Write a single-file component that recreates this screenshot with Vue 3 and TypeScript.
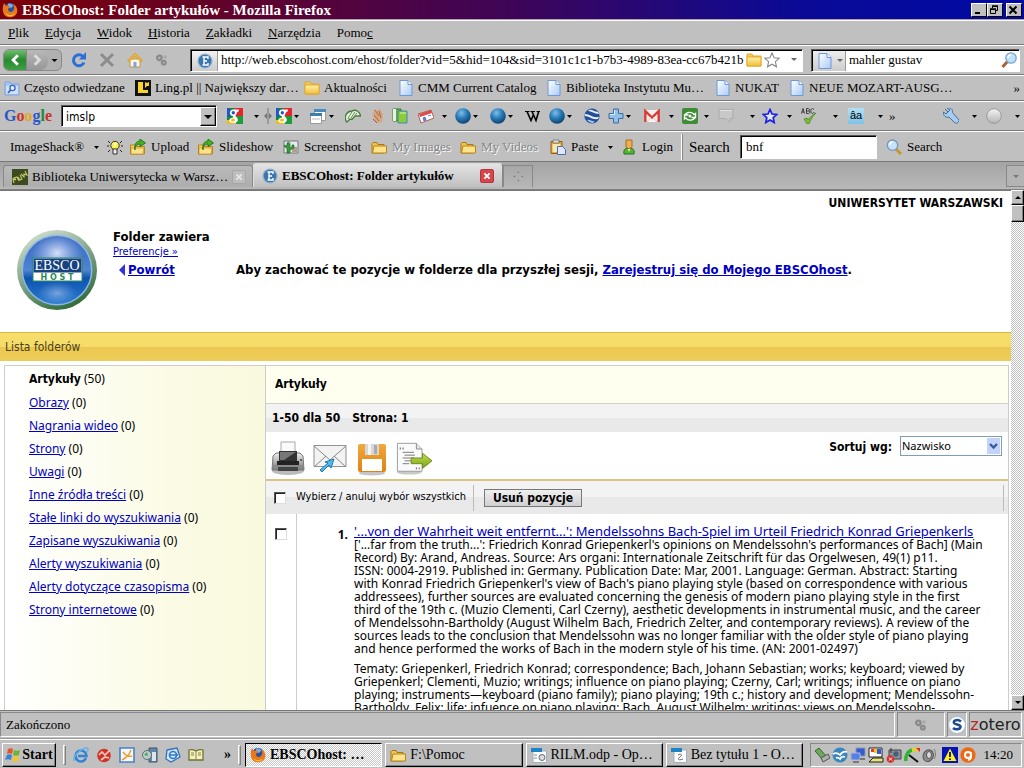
<script setup lang="ts">
import { ref } from 'vue'

interface Cell { icon: string; width: number; label?: string; dim?: boolean }

const menus = [
  { key: 'P', before: '', after: 'lik' },
  { key: 'E', before: '', after: 'dycja' },
  { key: 'W', before: '', after: 'idok' },
  { key: 'H', before: '', after: 'istoria' },
  { key: 'Z', before: '', after: 'akładki' },
  { key: 'N', before: '', after: 'arzędzia' },
  { key: 'c', before: 'Pomo', after: '' },
]

const bookmarks: Cell[] = [
  { icon: 'smart', width: 131, label: 'Często odwiedzane' },
  { icon: 'ling', width: 169, label: 'Ling.pl || Największy dar…' },
  { icon: 'folder', width: 94, label: 'Aktualności' },
  { icon: 'page', width: 148, label: 'CMM Current Catalog' },
  { icon: 'page', width: 169, label: 'Biblioteka Instytutu Mu…' },
  { icon: 'page', width: 74, label: 'NUKAT' },
  { icon: 'page', width: 180, label: 'NEUE MOZART-AUSG…' },
]

const googleCells: Cell[] = [
  { icon: 'gsquare', width: 27, label: 'Google' }, { icon: 'caret', width: 10 },
  { icon: 'splitter', width: 12 },
  { icon: 'gsquare', width: 18, label: 'Szukaj' }, { icon: 'caret', width: 16 },
  { icon: 'window', width: 19, label: 'Okno' }, { icon: 'caret', width: 16 },
  { icon: 'leaf', width: 25, label: 'Scholar' },
  { icon: 'hand', width: 22, label: 'Blog' },
  { icon: 'books', width: 26, label: 'Książki' },
  { icon: 'ticket', width: 24, label: 'Wiadomości' }, { icon: 'caret', width: 13 },
  { icon: 'ball', width: 18, label: 'Sieć' }, { icon: 'caret', width: 17 },
  { icon: 'ball', width: 18, label: 'Strony' }, { icon: 'caret', width: 17 },
  { icon: 'wiki', width: 24, label: 'Wikipedia' },
  { icon: 'ball', width: 18, label: 'Witryna' }, { icon: 'caret', width: 17 },
  { icon: 'earth', width: 24, label: 'Earth' },
  { icon: 'plus', width: 18, label: 'Dodaj' }, { icon: 'caret', width: 18 },
  { icon: 'gmail', width: 25, label: 'Gmail' }, { icon: 'caret', width: 13 },
  { icon: 'share', width: 22, label: 'Udostępnij' }, { icon: 'caret', width: 14 },
  { icon: 'bubble', width: 32, label: 'Komentarze' }, { icon: 'caret', width: 12 },
  { icon: 'bluestar', width: 25, label: 'Zakładki' }, { icon: 'caret', width: 14 },
  { icon: 'abc', width: 32, label: 'Pisownia' }, { icon: 'caret', width: 15 },
  { icon: 'translate', width: 30, label: 'Tłumacz' }, { icon: 'caret', width: 10 },
]

const googleRight: Cell[] = [
  { icon: 'wrench', width: 29, label: 'Ustawienia' }, { icon: 'caret', width: 14 },
  { icon: 'disc', width: 29, label: 'Konto' }, { icon: 'caret', width: 9 },
]

const shackCells: Cell[] = [
  { icon: 'upload', width: 68, label: 'Upload' },
  { icon: 'upload', width: 85, label: 'Slideshow' },
  { icon: 'screen', width: 88, label: 'Screenshot' },
  { icon: 'openfolder', width: 89, label: 'My Images', dim: true },
  { icon: 'openfolder', width: 90, label: 'My Videos', dim: true },
  { icon: 'paste', width: 58, label: 'Paste' },
]

const folders = [
  { name: 'Obrazy', count: 0 },
  { name: 'Nagrania wideo', count: 0 },
  { name: 'Strony', count: 0 },
  { name: 'Uwagi', count: 0 },
  { name: 'Inne źródła treści', count: 0 },
  { name: 'Stałe linki do wyszukiwania', count: 0 },
  { name: 'Zapisane wyszukiwania', count: 0 },
  { name: 'Alerty wyszukiwania', count: 0 },
  { name: 'Alerty dotyczące czasopisma', count: 0 },
  { name: 'Strony internetowe', count: 0 },
]

const abstractLines = [
  "['...far from the truth...': Friedrich Konrad Griepenkerl's opinions on Mendelssohn's performances of Bach] (Main",
  'Record) By: Arand, Andreas. Source: Ars organi: Internationale Zeitschrift für das Orgelwesen, 49(1) p11.',
  'ISSN: 0004-2919. Published in: Germany. Publication Date: Mar, 2001. Language: German. Abstract: Starting',
  "with Konrad Friedrich Griepenkerl's view of Bach's piano playing style (based on correspondence with various",
  'addressees), further sources are evaluated concerning the genesis of modern piano playing style in the first',
  'third of the 19th c. (Muzio Clementi, Carl Czerny), aesthetic developments in instrumental music, and the career',
  'of Mendelssohn-Bartholdy (August Wilhelm Bach, Friedrich Zelter, and contemporary reviews). A review of the',
  'sources leads to the conclusion that Mendelssohn was no longer familiar with the older style of piano playing',
  'and hence performed the works of Bach in the modern style of his time. (AN: 2001-02497)',
]

const subjectLines = [
  'Tematy: Griepenkerl, Friedrich Konrad; correspondence; Bach, Johann Sebastian; works; keyboard; viewed by',
  'Griepenkerl; Clementi, Muzio; writings; influence on piano playing; Czerny, Carl; writings; influence on piano',
  'playing; instruments—keyboard (piano family); piano playing; 19th c.; history and development; Mendelssohn-',
  'Bartholdy, Felix; life; infuence on piano playing; Bach, August Wilhelm; writings; views on Mendelssohn-',
]

const tools = [
  { icon: 'printer', label: 'Drukuj' },
  { icon: 'mail', label: 'E-mail' },
  { icon: 'floppy', label: 'Zapisz' },
  { icon: 'export', label: 'Eksport' },
]

const quick: string[] = ['ie', 'redball', 'pencil', 'media', 'outlook', 'book']
const tray: string[] = ['trayusb', 'trayoo', 'traynet', 'traypc', 'traycam', 'traymeter', 'trayvol']

const tasks = [
  { icon: 'firefox', label: 'EBSCOhost: …', active: true },
  { icon: 'openfolder', label: 'F:\\Pomoc', active: false },
  { icon: 'odp', label: 'RILM.odp - Op…', active: false },
  { icon: 'odt', label: 'Bez tytułu 1 - O…', active: false },
]

const url = ref('http://web.ebscohost.com/ehost/folder?vid=5&hid=104&sid=3101c1c1-b7b3-4989-83ea-cc67b421b')
const engineQuery = ref('mahler gustav')
const googleQuery = ref('imslp')
const shackQuery = ref('bnf')
const sortBy = ref('Nazwisko')
const allPicked = ref(false)
const firstPicked = ref(false)
</script>

<template>
  <svg class="defs" aria-hidden="true">
    <defs>
      <radialGradient id="g-ball" cx="0.4" cy="0.3" r="0.7"><stop offset="0" stop-color="#7cc0ea" /><stop offset="0.5" stop-color="#2b7cb8" /><stop offset="1" stop-color="#0d4474" /></radialGradient>
      <linearGradient id="g-page" x1="0" y1="0" x2="1" y2="1"><stop offset="0" stop-color="#ffffff" /><stop offset="1" stop-color="#a9cbf5" /></linearGradient>
      <linearGradient id="g-fold" x1="0" y1="0" x2="0" y2="1"><stop offset="0" stop-color="#fff2a8" /><stop offset="1" stop-color="#f0bd3c" /></linearGradient>
      <linearGradient id="g-rim" x1="0.2" y1="0" x2="0.7" y2="1"><stop offset="0" stop-color="#d3e3cc" /><stop offset="0.5" stop-color="#7da286" /><stop offset="1" stop-color="#2d6a35" /></linearGradient>
      <linearGradient id="g-glass" x1="0" y1="0" x2="0" y2="1"><stop offset="0" stop-color="#2f62bd" /><stop offset="0.5" stop-color="#4f86cf" /><stop offset="0.62" stop-color="#0d53ae" /><stop offset="1" stop-color="#2a7bd0" /></linearGradient>
      <radialGradient id="g-shine" cx="0.5" cy="0.5" r="0.5"><stop offset="0" stop-color="#e6ecff" stop-opacity="0.9" /><stop offset="1" stop-color="#a9bdf0" stop-opacity="0" /></radialGradient>
      <linearGradient id="g-print" x1="0" y1="0" x2="0" y2="1"><stop offset="0" stop-color="#eeeeee" /><stop offset="1" stop-color="#777777" /></linearGradient>
      <linearGradient id="g-disk" x1="0" y1="0" x2="0" y2="1"><stop offset="0" stop-color="#f3a73c" /><stop offset="1" stop-color="#dc8413" /></linearGradient>
      <linearGradient id="g-arrow" x1="0" y1="0" x2="0" y2="1"><stop offset="0" stop-color="#c5dc56" /><stop offset="1" stop-color="#7ba312" /></linearGradient>
      <linearGradient id="g-grey" x1="0" y1="0" x2="0" y2="1"><stop offset="0" stop-color="#f4f4f4" /><stop offset="1" stop-color="#b4b4b4" /></linearGradient>
    </defs>

    <symbol id="i-firefox" viewBox="0 0 16 16"><circle cx="8" cy="7.6" r="6.6" fill="#2c4fa6" /><path d="M6 2c2-1 5 0 5 2L9 6 6 5z" fill="#72b4e8" /><path d="M1 4c0-1 1-2 1-3l2 3c2-1 4 0 4 1L6 7c0 3 3 4 5 2 2-2 1-5 0-7 4 2 5 6 4 9-2 4-6 5-9 4C2 14 0 10 1 4z" fill="#e8791b" /><path d="M3 10c2 4 7 4 10 1-2 4-8 5-10-1z" fill="#fbc93d" /></symbol>
    <symbol id="i-smart" viewBox="0 0 16 16"><path d="M1 2h5l1 2h8v11H1z" fill="#a9c5f2" stroke="#7fa3e0" /><path d="M2 6h12v8H2z" fill="#cfe0fa" /><circle cx="8.5" cy="8" r="2.6" fill="#e6f0fd" stroke="#3566c0" stroke-width="1.3" /><path d="M6.6 10L4 13" stroke="#3566c0" stroke-width="1.8" /></symbol>
    <symbol id="i-ling" viewBox="0 0 16 16"><path d="M0 0h16v16H0z" fill="#111" /><path d="M3 2h5v8h5v3H3zM10 2l2 1 2-1v4h-2l-2 2z" fill="#f7d52a" /></symbol>
    <symbol id="i-folder" viewBox="0 0 16 16"><path d="M1 2h5l1 2h8v10H1z" fill="#f3cb55" stroke="#e1aa31" /><path d="M1 5h14v9H1z" fill="url(#g-fold)" stroke="#e1aa31" /></symbol>
    <symbol id="i-page" viewBox="0 0 16 16"><path d="M2 .5h8l4 4v11H2z" fill="url(#g-page)" stroke="#6e98d8" /><path d="M10 .5v4h4" fill="#f4f9ff" stroke="#6e98d8" /></symbol>
    <symbol id="i-ebsco" viewBox="0 0 16 16"><circle cx="8" cy="8" r="7.6" fill="#94b2cb" /><circle cx="8" cy="8" r="6.3" fill="#3b76ad" /><path d="M5.5 4h5.500v2M5.500 12h5.500v-2M7 4v8M7 8h3" fill="none" stroke="#fff" stroke-width="1.4" /></symbol>
    <symbol id="i-caret" viewBox="0 0 16 16"><path d="M0 7h5L2.500 10z" fill="#000" /></symbol>
    <symbol id="i-splitter" viewBox="0 0 16 16"><path d="M4 0v16" stroke="#777" /><path d="M3 5v6L0 8zM5 5v6l3-3z" fill="#777" /></symbol>
    <symbol id="i-gsquare" viewBox="0 0 16 16"><path d="M0 0h7v16H0z" fill="#0f8a35" /><path d="M7 0h9v8H9z" fill="#e3262b" /><path d="M9 8h7v8H9z" fill="#1d9c3b" /><path d="M0 0h3v9H0z" fill="#2356c9" /><path d="M0 12h8v4H0z" fill="#f3bb18" /><path d="M12 1.500H6C2.500 1.500 1.500 7 5.500 8c1 0 0 1 .5 1.500C1 10 1 15 6 15c6 0 6-4.500 2.500-6.500C7 7.500 9.800 7 9.800 4.500L12 3z" fill="#fff" /><circle cx="6.300" cy="4.700" r="1.700" fill="#2356c9" /><ellipse cx="6" cy="12" rx="2" ry="1.500" fill="#f3bb18" /></symbol>
    <symbol id="i-window" viewBox="0 0 16 16"><path d="M4.500 1.500h11v11h-11z" fill="#fff" stroke="#9a9a9a" /><path d="M4 1h12v3H4z" fill="#4c8bbd" /><path d="M.5 5.500h11v10H.5z" fill="#fff" stroke="#9a9a9a" /><path d="M0 5h12v3H0z" fill="#397ead" /><path d="M2 11h8" stroke="#bbb" /></symbol>
    <symbol id="i-leaf" viewBox="0 0 16 16"><path d="M1 13C-1 8 2 3 7 3c4-2 8 1 8.500 5L10 8l-3 3.500-2-.5-3 3z" fill="#e9f2e1" stroke="#4d7b3f" stroke-width="1.400" /><path d="M3 11c1-3 2-4 4-7M6 10l4-6M9 9l3-4" stroke="#5a934a" fill="none" /></symbol>
    <symbol id="i-hand" viewBox="0 0 16 16"><path d="M4 1l3 2 3-2 3 5-1 8-4 1-3-3-2-5z" fill="#d5a682" /><path d="M5 2l4 6M9 3l2 7M4 7l5 6" stroke="#b2683f" /><path d="M3 11l4 4" stroke="#c83a32" /></symbol>
    <symbol id="i-books" viewBox="0 0 16 16"><path d="M1 1h8v12H1z" fill="#6aa84a" stroke="#3d7a2a" /><path d="M1 1h3v12H1z" fill="#e8f3dc" /><path d="M6 3h9v12H6z" fill="#89cd3c" stroke="#3c8ab4" /><path d="M8 5h6" stroke="#dff3b9" /></symbol>
    <symbol id="i-ticket" viewBox="0 0 16 16"><path d="M0 6l13-4 3 8-13 5z" fill="#fff" stroke="#b45b5b" /><path d="M1 6l12-4 1 3L2 9z" fill="#dd4c44" /><path d="M5 10l2-1 1 3-2 1zM10 8l3-1" fill="#5c7fd0" stroke="#5c7fd0" /></symbol>
    <symbol id="i-ball" viewBox="0 0 16 16"><circle cx="8" cy="8" r="7.800" fill="url(#g-ball)" /></symbol>
    <symbol id="i-wiki" viewBox="0 0 16 16"><path d="M0 3.500h4.500M5.500 3.500H10M11.500 3.500H15" stroke="#000" /><path d="M2 3.500l4 9 2.500-6M7 3.500l4 9 2.700-9" fill="none" stroke="#000" stroke-width="1.600" /></symbol>
    <symbol id="i-earth" viewBox="0 0 16 16"><circle cx="8" cy="8" r="7.600" fill="#244f9c" /><path d="M1 6c5 0 7 4 14 3l-1 2C8 12 5 8 1 8zM4 3c4 0 6 3 11 3l-1-2C10 4 8 1 5 2z" fill="#e8f1fb" /><path d="M3 12c3-1 5 2 8 1l-2 2c-2 0-4-1-6-3z" fill="#a8c8ea" /></symbol>
    <symbol id="i-plus" viewBox="0 0 16 16"><path d="M5.500 1h5v4.500H15v5h-4.500V15h-5v-4.500H1v-5h4.500z" fill="#8fc0ec" stroke="#3c6da5" /><path d="M6.500 2v4.500H2" stroke="#e0effc" fill="none" /></symbol>
    <symbol id="i-gmail" viewBox="0 0 16 16"><path d="M0 2h16v12H0z" fill="#f6f1ee" /><path d="M1.300 14V3L8 9.500 14.700 3v11" fill="none" stroke="#d93a34" stroke-width="2.400" /><path d="M3 14l4-5M13 14L9 9" stroke="#d6c7c2" /></symbol>
    <symbol id="i-share" viewBox="0 0 16 16"><rect width="16" height="16" rx="2" fill="#3e8c34" /><path d="M2.500 7.500c2-4 8-4 9.500-1l1.500-1v4h-4M13.500 9c-2 4-8 4-9.500 1l-1.500 1V7h4" fill="none" stroke="#fff" stroke-width="1.400" /><circle cx="8" cy="8" r="1.500" fill="#fff" /></symbol>
    <symbol id="i-bubble" viewBox="0 0 16 16"><path d="M1 1.500h14v9h-3v4l-4-4H1z" fill="#c8c8c8" stroke="#aaa" /><path d="M2 2.500h12" stroke="#e4e4e4" /></symbol>
    <symbol id="i-bluestar" viewBox="0 0 16 16"><path d="M8 1.500l2 4.500 4.800.5-3.600 3.200 1 4.800L8 12l-4.200 2.500 1-4.800L1.200 6.500 6 6z" fill="#dfeaff" stroke="#1b1bec" stroke-width="1.700" /></symbol>
    <symbol id="i-abc" viewBox="0 0 16 16"><path d="M.5 5.500l1.500-5 1.500 5M1 4h2M5.500.500v5h2c2 0 1.500-2.700 0-2.700 1.500 0 1.200-2.300-.2-2.300zM5.500 3h2M13 1.500c-2-2-3.500 0-3.200 1.500.2 3 2.700 3 3.400 1" fill="none" stroke="#333" stroke-width=".9" /><path d="M3 11l3-1 1 2c2-3 4-5 8-7-3 3-5 6-7 11H6z" fill="#78bd35" stroke="#3d7a18" stroke-width=".6" /></symbol>
    <symbol id="i-wrench" viewBox="0 0 16 16"><path d="M2 1l3 3 2-2-3-2c3-1 6 1 5.500 4.500L16 12c0 2-2 4-4 3L6 9C3 10 0 8 .5 4L3 6l2-2z" fill="#a8cdee" stroke="#3f719f" /></symbol>
    <symbol id="i-disc" viewBox="0 0 16 16"><circle cx="8" cy="8" r="7.300" fill="url(#g-grey)" stroke="#999" /></symbol>
    <symbol id="i-bulb" viewBox="0 0 16 16"><path d="M1 2l2 2M15 2l-2 2M0 7h2M14 7h2M1 13l2-2M15 13l-2-2" stroke="#222" /><circle cx="8" cy="6.500" r="4.200" fill="#f9f04b" stroke="#333" /><path d="M6 10h4v5H6z" fill="#eee" stroke="#333" /><path d="M7 4l1 3 1-3" stroke="#fff" fill="none" /></symbol>
    <symbol id="i-upload" viewBox="0 0 16 16"><path d="M.5 6h5l1 1.500h8V15H.5z" fill="#f6cf55" stroke="#b98419" /><path d="M1 9h13l-1 6H1z" fill="#fbe28a" stroke="#b98419" stroke-width=".6" /><path d="M5 11c0-4 2-6 5-6V7.500L15.500 4 10 0v2C6 2 4 6 5 11z" fill="#44b41d" stroke="#17660a" stroke-width=".8" /></symbol>
    <symbol id="i-screen" viewBox="0 0 16 16"><path d="M1 2h14v12H1z" fill="#e4e9ee" stroke="#777" /><path d="M9 8h5v5H9z" fill="#b3a08a" /><path d="M4 14V9L1.500 8V6L4 7V4c2-2 3 0 3 1v4l2-1V6h2v3l-4 2v3z" fill="#3d9c3a" stroke="#1b5b22" stroke-width=".6" /></symbol>
    <symbol id="i-openfolder" viewBox="0 0 16 16"><path d="M1 4.500V14h12V5.500H7l-1-2H2z" fill="#efc353" stroke="#a97814" /><path d="M3 7h12.500v7h-14z" fill="#fde38c" stroke="#b98419" /></symbol>
    <symbol id="i-paste" viewBox="0 0 16 16"><path d="M1 2.500h11v12H1z" fill="#e2a838" stroke="#8d6214" /><path d="M3 1h6v3H3z" fill="#d9dde4" stroke="#666" stroke-width=".7" /><path d="M2.500 5h8v8h-8z" fill="#f8e6b3" /><path d="M7.500 7.500h5l3 3v5h-8z" fill="#dfe8fa" stroke="#4c6db2" /></symbol>
    <symbol id="i-user" viewBox="0 0 16 16"><path d="M3 15c-1-5 2-6 5-6s6 1 5 6z" fill="#55b338" stroke="#28721a" /><path d="M5 1h6v7l-3 2-3-2z" fill="#eeb04a" stroke="#a96c18" /><path d="M7 10l1 3 1-3z" fill="#fff" /></symbol>
    <symbol id="i-lens" viewBox="0 0 16 16"><path d="M10 10l5 5" stroke="#c49531" stroke-width="3" /><circle cx="6.500" cy="6.200" r="5.200" fill="#c5e2fa" stroke="#7895b4" stroke-width="1.300" /><path d="M3.500 6c0-2 1-3 3-3" stroke="#fff" stroke-width="1.500" fill="none" /></symbol>
    <symbol id="i-lensleft" viewBox="0 0 16 16"><path d="M6.500 9.500L1.500 15" stroke="#a56434" stroke-width="3" /><circle cx="10" cy="6" r="5.200" fill="#bfe3fb" stroke="#7ba4cf" stroke-width="1.300" /><path d="M7 6c0-2 1-3 3-3" stroke="#fff" stroke-width="1.500" fill="none" /></symbol>
    <symbol id="i-star" viewBox="0 0 16 16"><path d="M8 .9l2.100 4.800 5.200.5-3.900 3.500 1.100 5.100L8 12.200l-4.500 2.600 1.100-5.100L.7 6.200l5.200-.5z" fill="#fff" stroke="#888" stroke-width="1.100" /></symbol>
    <symbol id="i-gears" viewBox="0 0 16 16"><circle cx="5" cy="5.500" r="2.600" fill="#bbb" stroke="#8a8a8a" stroke-width="2.600" /><circle cx="10" cy="11" r="2.200" fill="#bbb" stroke="#8a8a8a" stroke-width="2.400" /><circle cx="11.500" cy="4.500" r="2" fill="#a9a9a9" /></symbol>
    <symbol id="i-reload" viewBox="0 0 16 16"><path d="M12 4.500A5.500 5.500 0 1 0 13 10.500" fill="none" stroke="#2a6fd8" stroke-width="3" /><path d="M15 0v7.500H8z" fill="#2a6fd8" /></symbol>
    <symbol id="i-stop" viewBox="0 0 16 16"><path d="M2 2l12 12M14 2L2 14" stroke="#8c8c8c" stroke-width="3" /></symbol>
    <symbol id="i-home" viewBox="0 0 16 16"><path d="M3 7h10v8H3z" fill="#fdf6e2" stroke="#b99749" /><path d="M.5 8.500L8 1l7.500 7.500-1.500 1L8 4 2 9.500z" fill="#f4b62e" stroke="#d08f12" stroke-width=".6" /><path d="M6.500 10h3v5h-3z" fill="#7da5d8" /></symbol>
    <symbol id="i-buw" viewBox="0 0 16 16"><path d="M0 0h16v16H0z" fill="#3c4a1d" /><path d="M2 14l-1-4 3 1-2-2 3-1 2 4M6 8l2 3 2-1-2-4M9 5l3 3v-3l3 1-2-4" stroke="#c6c970" stroke-width="1.100" fill="none" /></symbol>
    <symbol id="i-xred" viewBox="0 0 16 16"><rect x=".5" y=".5" width="15" height="15" rx="2" fill="#d9434c" stroke="#a62630" /><path d="M5 5l6 6M11 5l-6 6" stroke="#fff" stroke-width="2.200" /></symbol>
    <symbol id="i-xgrey" viewBox="0 0 16 16"><rect x=".5" y=".5" width="15" height="15" rx="2" fill="#bdbdbd" stroke="#a2a2a2" /><path d="M5 5l6 6M11 5l-6 6" stroke="#e6e6e6" stroke-width="2.200" /></symbol>

    <symbol id="i-printer" viewBox="0 0 36 36"><ellipse cx="18" cy="31" rx="16" ry="4" fill="#bbb" /><path d="M11 2h14v11H11z" fill="#fafafa" stroke="#aaa" /><path d="M6 13h24l3 3 1 14H2l1-14z" fill="url(#g-print)" stroke="#777" /><path d="M9 11h18v10H9z" fill="#333" /><path d="M10 12h16l-12 8h-4z" fill="#777" /><path d="M7 21h22v5H7z" fill="#222" /><path d="M3 25h30v4H3z" fill="#8a8a8a" /><path d="M8 27h20v4H8z" fill="#444" /><circle cx="31" cy="20" r="1" fill="#444" /></symbol>
    <symbol id="i-mail" viewBox="0 0 36 36"><path d="M2 5.500h32v21H2z" fill="#f3f3f3" stroke="#929292" /><path d="M2 27l12-11M34 27L22 16M2 6l16 14L34 6" fill="none" stroke="#888" /><path d="M8 30l8-7-3-1 9-3-3 9-2-3-7 7z" fill="#55b8e8" stroke="#1c7db0" /></symbol>
    <symbol id="i-floppy" viewBox="0 0 36 36"><ellipse cx="18" cy="33" rx="13" ry="2.500" fill="#c4c4c4" /><rect x="4" y="4" width="28" height="28" rx="2" fill="url(#g-disk)" /><path d="M11 4h14v11H11z" fill="#d7d7d7" /><path d="M14 4h3v11h-3z" fill="#f5f5f5" /><path d="M20 5h3v9h-3z" fill="#aaa" /><path d="M8 19h20v12H8z" fill="#fff" /></symbol>
    <symbol id="i-export" viewBox="0 0 38 36"><ellipse cx="14" cy="33" rx="13" ry="2.500" fill="#c9c9c9" /><path d="M1.500 2.500h20l6 6V32h-26z" fill="#fafafa" stroke="#999" /><path d="M21.500 2.500v6h6" fill="#e5e5e5" stroke="#888" /><path d="M7 12h12M9 15h11M7 18h12M9 21h8M7 24h7" stroke="#777" /><path d="M4 8h1M7 8h1M21 29h1M24 29h1" stroke="#555" stroke-width="2" /><path d="M16 18h12v-5l10 8-10 8v-5H16z" fill="url(#g-arrow)" stroke="#6c8c1c" /></symbol>

    <symbol id="i-winflag" viewBox="0 0 16 16"><path d="M3 2c2-1 3-1 5 0L7 7C5 6 4 6 2 7z" fill="#e5532b" /><path d="M9 3c2 1 4 1 6 0l-1 5c-2 1-4 1-6 0z" fill="#6db33a" /><path d="M2 8c2-1 3-1 5 0l-1 5c-2-1-4-1-6 0z" fill="#3c7fd6" /><path d="M8 9c2 1 4 1 6 0l-1 5c-2 1-4 1-6 0z" fill="#f4c52b" /></symbol>
    <symbol id="i-ie" viewBox="0 0 16 16"><path d="M13 11c-1 2-3 3.500-5 3.500A5.500 5.500 0 1 1 13.500 9H5" fill="none" stroke="#2f84d6" stroke-width="2.600" /><path d="M1 14C-1 10 8 1 14 1c2 1 1 3 0 4" fill="none" stroke="#67b3ea" stroke-width="1.500" /></symbol>
    <symbol id="i-redball" viewBox="0 0 16 16"><circle cx="8" cy="8.500" r="6.800" fill="#cf3226" /><path d="M3 8l3-3 3 3 5-5M5 13l4-3 4 1" stroke="#f6c8bd" stroke-width="1.700" fill="none" /></symbol>
    <symbol id="i-pencil" viewBox="0 0 16 16"><path d="M1 1h14v14H1z" fill="#f5f9ff" stroke="#4583c9" stroke-width="1.600" /><path d="M3 13c2-1 7-4 9-10M4 5c3 4 5 5 9 4" stroke="#ef9c28" stroke-width="1.500" fill="none" /></symbol>
    <symbol id="i-media" viewBox="0 0 16 16"><path d="M7 1h8v14H7z" fill="#5d8cae" stroke="#45535f" /><path d="M10 5h4v9h-4z" fill="#dfe5ea" /><circle cx="5" cy="8" r="4.500" fill="#c1c9ca" stroke="#55766c" /><path d="M2 8l3-3 1 4z" fill="#45a36b" /></symbol>
    <symbol id="i-outlook" viewBox="0 0 16 16"><path d="M2 3l10-2 3 9-9 5-5-3z" fill="#d6e8fb" stroke="#326fba" stroke-width="1.300" /><circle cx="8" cy="8" r="3.500" fill="none" stroke="#2e7cc5" stroke-width="1.700" /><path d="M5 8h8" stroke="#2e7cc5" stroke-width="1.500" /></symbol>
    <symbol id="i-book" viewBox="0 0 16 16"><path d="M1 3c3-1 5 0 7 1 2-1 4-2 7-1v10H1z" fill="#f4f1bd" stroke="#6f702f" stroke-width="1.300" /><path d="M8 4v9M3 6h3M3 8h3M10 6h3M10 8h3" stroke="#85854b" /></symbol>
    <symbol id="i-odp" viewBox="0 0 16 16"><path d="M2 4h13.500v11.500H2z" fill="#fff" stroke="#9cb0bf" /><path d="M0 1h11v4H0z" fill="#1b84c5" /><path d="M3 8h3M3 11h3" stroke="#889" /><circle cx="11" cy="10.500" r="3" fill="#ddd" stroke="#667" /></symbol>
    <symbol id="i-odt" viewBox="0 0 16 16"><path d="M3 3h12.500v12.500H3z" fill="#fff" stroke="#9cb0bf" /><path d="M0 1h11v4H0z" fill="#1b84c5" /><path d="M7 8c3-2 5 0 2 2s-2 4 3 2" fill="none" stroke="#667" /></symbol>

    <symbol id="i-trayusb" viewBox="0 0 16 16"><path d="M1 4l4-3 8 9-4 3z" fill="#6da75c" stroke="#35642c" /><path d="M7 11l7-4 2 4-7 4z" fill="#a8b0a8" stroke="#555" /></symbol>
    <symbol id="i-trayoo" viewBox="0 0 16 16"><circle cx="8" cy="8" r="7.500" fill="#3a86be" /><path d="M1 7c3-2 5-1 7 1 2-3 4-4 7-3M4 11c2-1 3 0 4 1 1-2 3-3 5-2" stroke="#fff" stroke-width="1.700" fill="none" /></symbol>
    <symbol id="i-traynet" viewBox="0 0 16 16"><path d="M6 1h9v8H6z" fill="#335dcf" stroke="#8a98ba" /><path d="M1 6h9v7H1z" fill="#547eea" stroke="#b2b9cc" /><path d="M3 15h6M10 12h5" stroke="#777" stroke-width="2" /></symbol>
    <symbol id="i-traypc" viewBox="0 0 16 16"><path d="M1 1h13v9H1z" fill="#fff" stroke="#222" /><path d="M3 2h3v3H3z" fill="#e32" /><path d="M6 2h3v4H6z" fill="#fc0" /><path d="M9 2h4v5H9z" fill="#35d" /><path d="M1 15l4-4h10v4z" fill="#e8e477" stroke="#222" /></symbol>
    <symbol id="i-traycam" viewBox="0 0 16 16"><path d="M3 3h12v9H3z" fill="#8b949b" stroke="#444" /><circle cx="10" cy="7" r="2.700" fill="#40617d" /><path d="M5 1v5" stroke="#333" /><circle cx="4.500" cy="12" r="3.800" fill="#d72f2f" /><path d="M3 10.500l3 3M6 10.500l-3 3" stroke="#fff" /></symbol>
    <symbol id="i-traymeter" viewBox="0 0 16 16"><path d="M2 14C1 9 4 4 8 3" stroke="#2cb62c" stroke-width="3.500" fill="none" /><path d="M8 3l7-1" stroke="#e1d52b" stroke-width="3.500" /><path d="M12 1h4v4z" fill="#e22" /><path d="M5 8l9 7" stroke="#111" stroke-width="2" /></symbol>
    <symbol id="i-trayvol" viewBox="0 0 16 16"><ellipse cx="6.500" cy="8.500" rx="5" ry="6" fill="#8b8b8b" stroke="#555" transform="rotate(25 6 8)" /><ellipse cx="7" cy="8" rx="2.500" ry="3.500" fill="#d8d8d8" stroke="#555" /><path d="M12 2c2 3 2 7 0 10" stroke="#777" fill="none" /></symbol>
    <symbol id="i-traywarn" viewBox="0 0 16 16"><path d="M0 0h16v16H0z" fill="#0712b5" /><path d="M8 1.500l6.500 12.500h-13z" fill="#ffef1d" /><path d="M8 5v5M8 11.500v1.500" stroke="#111" stroke-width="1.800" /></symbol>
    <symbol id="i-trayavast" viewBox="0 0 16 16"><circle cx="8" cy="8" r="7.700" fill="#ec6a15" /><circle cx="8" cy="8" r="3" fill="none" stroke="#fff" stroke-width="2" /><path d="M11 5v5c0 2-1 3-3 3" stroke="#fff" stroke-width="1.600" fill="none" /></symbol>
    <symbol id="i-sball" viewBox="0 0 18 18"><circle cx="9" cy="9" r="8.500" fill="#fff" stroke="#a7bacf" /><path d="M13 5.500C10 3 5 4 6 7c1 2 6 1 6.500 3.500.5 3-5 3.500-7.500 1.500" fill="none" stroke="#1d4c8c" stroke-width="2.600" /></symbol>
  </svg>

  <div class="screen">
    <header class="titlebar">
      <svg class="ic"><use href="#i-firefox" /></svg>
      <h1>EBSCOhost: Folder artykułów - Mozilla Firefox</h1>
      <button class="winbtn" aria-label="Minimalizuj"><svg viewBox="0 0 12 10"><path d="M3 8h5" stroke="#000" stroke-width="2" /></svg></button>
      <button class="winbtn" aria-label="Przywróć"><svg viewBox="0 0 12 10"><path d="M4.500 3V1.500h5v4H8M2.500 4.500h5v4h-5z" fill="none" stroke="#000" /><path d="M4 1h6M2 4h6" stroke="#000" stroke-width="1.500" /></svg></button>
      <button class="winbtn close" aria-label="Zamknij"><svg viewBox="0 0 12 10"><path d="M2.500 1.500l7 7M9.500 1.500l-7 7" stroke="#000" stroke-width="2" /></svg></button>
    </header>

    <nav class="menubar" aria-label="Menu">
      <button v-for="m in menus" :key="m.key + m.after" class="flat">{{ m.before }}<u>{{ m.key }}</u>{{ m.after }}</button>
    </nav>

    <div class="navbar">
      <div class="history">
        <button class="back" aria-label="Wstecz"><svg viewBox="0 0 22 21"><path d="M14 5.500L9 10.500l5 5" fill="none" stroke="#fff" stroke-width="3" /></svg></button>
        <button class="fwd" aria-label="Dalej"><svg viewBox="0 0 22 21"><path d="M8 5.500l5 5-5 5" fill="none" stroke="#dcdcdc" stroke-width="3" /></svg></button>
        <button class="drop" aria-label="Historia"><svg viewBox="0 0 10 20"><path d="M2 9h6L5 12z" fill="#000" /></svg></button>
      </div>
      <div class="navicons">
        <button class="flat" aria-label="Odśwież"><svg class="ic"><use href="#i-reload" /></svg></button>
        <button class="flat" aria-label="Zatrzymaj"><svg class="ic"><use href="#i-stop" /></svg></button>
        <button class="flat" aria-label="Strona domowa"><svg class="ic"><use href="#i-home" /></svg></button>
        <button class="flat" aria-label="Dodatki"><svg class="ic small"><use href="#i-gears" /></svg></button>
      </div>
      <div class="sunken urlbox">
        <span class="identity"><svg class="ic"><use href="#i-ebsco" /></svg></span>
        <input v-model="url" type="text" aria-label="Adres" />
        <svg class="ic"><use href="#i-folder" /></svg>
        <svg class="ic"><use href="#i-star" /></svg>
        <svg class="tri" viewBox="0 0 10 6"><path d="M2 1h6L5 4z" fill="#666" /></svg>
      </div>
      <div class="sunken enginebox">
        <span class="engine"><svg class="ic"><use href="#i-page" /></svg><svg class="tri" viewBox="0 0 10 6"><path d="M2 1h6L5 4z" fill="#666" /></svg></span>
        <input v-model="engineQuery" type="text" aria-label="Wyszukiwarka" />
        <svg class="ic"><use href="#i-lensleft" /></svg>
      </div>
    </div>

    <div class="bookmarks">
      <a v-for="b in bookmarks" :key="b.label" href="#" :style="{ width: b.width + 'px' }"><svg class="ic"><use :href="'#i-' + b.icon" /></svg>{{ b.label }}</a>
      <button class="flat more" aria-label="Więcej zakładek">»</button>
    </div>

    <div class="googlebar">
      <span class="glogo"><b class="b">G</b><b class="r">o</b><b class="y">o</b><b class="b">g</b><b class="g">l</b><b class="r">e</b></span>
      <div class="sunken gbox">
        <input v-model="googleQuery" type="text" aria-label="Google" />
        <button class="raised" aria-label="Rozwiń"><svg viewBox="0 0 10 6"><path d="M1 1h8L5 5z" fill="#000" /></svg></button>
      </div>
      <button v-for="(c, i) in googleCells" :key="i" class="flat cell" :aria-label="c.label || 'Rozwiń'" :style="{ width: c.width + 'px' }">
        <span v-if="c.icon === 'translate'" class="translate">âa</span>
        <svg v-else class="ic"><use :href="'#i-' + c.icon" /></svg>
      </button>
      <span class="chev">»</span>
      <div class="gright">
        <button v-for="(c, i) in googleRight" :key="i" class="flat cell" :aria-label="c.label || 'Rozwiń'" :style="{ width: c.width + 'px' }"><svg class="ic"><use :href="'#i-' + c.icon" /></svg></button>
      </div>
    </div>

    <div class="shackbar">
      <button class="flat brand">ImageShack®</button>
      <button class="flat cell arrow" aria-label="Rozwiń"><svg class="ic"><use href="#i-caret" /></svg></button>
      <button class="flat cell bulb" aria-label="Wskazówka"><svg class="ic"><use href="#i-bulb" /></svg></button>
      <button v-for="c in shackCells" :key="c.label" class="flat cell labelled" :class="{ dim: c.dim }" :style="{ width: c.width + 'px' }"><svg class="ic"><use :href="'#i-' + c.icon" /></svg>{{ c.label }}</button>
      <button class="flat cell arrow" aria-label="Rozwiń"><svg class="ic"><use href="#i-caret" /></svg></button>
      <button class="flat cell labelled login"><svg class="ic"><use href="#i-user" /></svg>Login</button>
      <label class="searchlabel" for="shack">Search</label>
      <input id="shack" v-model="shackQuery" class="sunken shackinput" type="text" />
      <button class="flat cell labelled find"><svg class="ic"><use href="#i-lens" /></svg>Search</button>
    </div>

    <div class="tabs">
      <div class="tab"><svg class="ic"><use href="#i-buw" /></svg><span>Biblioteka Uniwersytecka w Warsz…</span><button class="flat x" aria-label="Zamknij kartę"><svg><use href="#i-xgrey" /></svg></button></div>
      <div class="tab on"><svg class="ic"><use href="#i-ebsco" /></svg><span>EBSCOhost: Folder artykułów</span><button class="flat x" aria-label="Zamknij kartę"><svg><use href="#i-xred" /></svg></button></div>
      <button class="newtab" aria-label="Nowa karta">⁘</button>
      <button class="alltabs" aria-label="Lista kart"><svg viewBox="0 0 10 6"><path d="M2 1h6L5 4z" fill="#777" /></svg></button>
    </div>

    <div class="viewport">
      <main class="page">
        <section class="top">
          <p class="school">UNIWERSYTET WARSZAWSKI</p>
          <svg class="logo" viewBox="0 0 82 82" role="img" aria-label="EBSCO Host">
            <circle cx="41" cy="41" r="40" fill="url(#g-rim)" />
            <circle cx="41" cy="41" r="35.500" fill="#8fb6e6" />
            <circle cx="41" cy="41" r="34" fill="url(#g-glass)" />
            <ellipse cx="41" cy="24" rx="27" ry="22" fill="url(#g-shine)" />
            <ellipse cx="41" cy="64" rx="20" ry="12" fill="url(#g-shine)" opacity=".5" />
            <rect x="17" y="29" width="49" height="23" fill="#fff" stroke="#2f8a63" />
            <path d="M17.500 29.500h48v14h-48z" fill="#16427f" />
            <text x="41" y="41" text-anchor="middle" font-family="Liberation Serif" font-size="14" fill="#fff">EBSCO</text>
            <text x="41" y="51" text-anchor="middle" font-family="DejaVu Sans" font-size="8" font-weight="bold" fill="#2d8a56">H O S T</text>
          </svg>
          <div class="headings">
            <h2>Folder zawiera</h2>
            <a class="pref" href="#">Preferencje »</a>
            <div class="backrow">
              <svg class="left" viewBox="0 0 8 12"><path d="M7 0v12L1 6z" fill="#3333dd" /></svg>
              <a class="powrot" href="#">Powrót</a>
              <strong>Aby zachować te pozycje w folderze dla przyszłej sesji, <a href="#">Zarejestruj się do Mojego EBSCOhost</a>.</strong>
            </div>
          </div>
        </section>

        <div class="gold">Lista folderów</div>

        <div class="panels">
          <aside class="side">
            <ul>
              <li><strong>Artykuły</strong> (50)</li>
              <li v-for="f in folders" :key="f.name"><a href="#">{{ f.name }}</a> ({{ f.count }})</li>
            </ul>
          </aside>
          <section class="main">
            <h3>Artykuły</h3>
            <div class="range"><span>1-50 dla 50</span><span>Strona: 1</span></div>
            <div class="tools">
              <button v-for="t in tools" :key="t.icon" class="flat tool" :aria-label="t.label"><svg><use :href="'#i-' + t.icon" /></svg></button>
              <label for="sort">Sortuj wg:</label>
              <span class="selectbox">
                <select id="sort" v-model="sortBy"><option>Nazwisko</option></select>
                <svg viewBox="0 0 13 16"><path d="M3 6l3.500 3.500L10 6" fill="none" stroke="#3a5a98" stroke-width="2.400" /></svg>
              </span>
            </div>
            <div class="bulk">
              <input id="all" v-model="allPicked" type="checkbox" />
              <label for="all">Wybierz / anuluj wybór wszystkich</label>
              <button class="remove">Usuń pozycje</button>
              <span class="bulkend"></span>
            </div>
            <article class="record">
              <div class="pick"><input v-model="firstPicked" type="checkbox" aria-label="Wybierz pozycję 1" /></div>
              <span class="num">1.</span>
              <div class="text">
                <a href="#">'...von der Wahrheit weit entfernt...': Mendelssohns Bach-Spiel im Urteil Friedrich Konrad Griepenkerls</a>
                <p><span v-for="l in abstractLines" :key="l">{{ l }}</span></p>
                <p><span v-for="l in subjectLines" :key="l">{{ l }}</span></p>
              </div>
            </article>
          </section>
        </div>
      </main>
      <div class="scroll">
        <button class="raised" aria-label="W górę"><svg viewBox="0 0 10 6"><path d="M2 4h6L5 1z" fill="#000" /></svg></button>
        <div class="raised thumb"></div>
        <button class="raised down" aria-label="W dół"><svg viewBox="0 0 10 6"><path d="M2 1h6L5 4z" fill="#000" /></svg></button>
      </div>
    </div>

    <footer class="status">
      <span class="pane grow">Zakończono</span>
      <span class="pane gears"><svg class="ic small"><use href="#i-gears" /></svg></span>
      <span class="pane sb"><svg><use href="#i-sball" /></svg></span>
      <span class="pane zotero"><i>z</i>otero</span>
    </footer>

    <div class="taskbar">
      <button class="raised start"><svg class="ic"><use href="#i-winflag" /></svg>Start</button>
      <span class="grip"></span>
      <div class="quick">
        <button v-for="q in quick" :key="q" class="flat" :aria-label="q"><svg class="ic"><use :href="'#i-' + q" /></svg></button>
      </div>
      <span class="qmore">»</span>
      <span class="grip"></span>
      <div class="tasks">
        <button v-for="t in tasks" :key="t.label" class="raised task" :class="{ active: t.active }"><svg class="ic"><use :href="'#i-' + t.icon" /></svg>{{ t.label }}</button>
      </div>
      <div class="tray">
        <svg v-for="t in tray" :key="t" class="ic"><use :href="'#i-' + t" /></svg>
        <svg class="ic warn"><use href="#i-traywarn" /></svg>
        <svg class="ic"><use href="#i-trayavast" /></svg>
        <time>14:20</time>
      </div>
    </div>
  </div>
</template>

<style>
body { margin: 0; background: #c0c0c0; overflow: hidden; }
</style>

<style scoped>
* { box-sizing: border-box; }
.defs { position: absolute; width: 0; height: 0; }
.screen { height: 100vh; display: flex; flex-direction: column; background: #c0c0c0; color: #000; font: 13px/16px "Liberation Serif", serif; overflow: hidden; }
.screen > * { flex: none; }
button, input, select { font: inherit; color: inherit; margin: 0; padding: 0; border-radius: 0; }
input { outline: none; }
.ic { width: 16px; height: 16px; flex: none; display: block; }
.ic.small { width: 14px; height: 14px; }
.flat { background: none; border: 0; white-space: nowrap; text-align: left; }
.raised { background: #c0c0c0; border: 1px solid; border-color: #fff #000 #000 #fff; box-shadow: inset -1px -1px #808080; display: flex; align-items: center; justify-content: center; }
.sunken { background: #fff; border: 1px solid; border-color: #555 #fff #fff #555; box-shadow: inset 1px 1px #000; }

.titlebar { height: 20px; display: flex; align-items: center; padding: 0 2px 0 2px; background: linear-gradient(90deg, #7d0006, #3e0558 50%, #0a0a96 78%, #000aa4); border-bottom: 1px solid #b0a0b0; }
.titlebar h1 { margin: 0; padding-left: 4px; flex: 1; font-size: 15px; font-weight: bold; color: #fff; white-space: nowrap; }
.winbtn { width: 16px; height: 14px; background: #c0c0c0; border: 1px solid; border-color: #fff #000 #000 #fff; }
.winbtn svg { display: block; width: 12px; height: 10px; }
.winbtn.close { margin-left: 3px; }

.menubar { height: 25px; display: flex; align-items: center; gap: 16px; padding: 0 8px; border-top: 1px solid #fff; border-bottom: 1px solid #777; }

.navbar { height: 30px; display: flex; align-items: center; padding: 0 4px 0 3px; border-top: 1px solid #fff; border-bottom: 1px solid #777; }
.history { display: flex; height: 22px; width: 59px; border: 1px solid #8a8a8a; border-radius: 6px; overflow: hidden; background: #b0b0b0; }
.history button { border: 0; background: none; }
.history svg { display: block; height: 20px; width: 100%; }
.history .back { width: 22px; background: linear-gradient(#71bd71, #278a2f 50%, #3f9f45); }
.history .fwd { width: 22px; background: linear-gradient(#b8b8b8, #979797); border-left: 1px solid #888; border-radius: 0 8px 8px 0; }
.history .drop { width: 13px; }
.navicons { display: flex; align-items: center; gap: 12px; width: 128px; padding-left: 9px; }
.sunken input { border: 0; background: none; min-width: 0; flex: 1; }
.urlbox { flex: 1; height: 23px; display: flex; align-items: center; padding-right: 3px; }
.identity { width: 26px; height: 20px; margin: 1px 3px 0 1px; background: linear-gradient(#f2f2f2, #ccc); border-right: 1px solid #999; display: flex; align-items: center; justify-content: center; }
.urlbox > .ic { margin-right: 2px; }
.tri { width: 10px; height: 6px; margin-left: 7px; }
.enginebox { width: 209px; height: 23px; margin-left: 8px; display: flex; align-items: center; padding-right: 2px; }
.engine { width: 33px; height: 20px; margin: 1px 3px 0 1px; background: linear-gradient(#eee, #ccc); border-right: 1px solid #999; display: flex; align-items: center; padding-left: 4px; }
.engine .tri { margin-left: 2px; }

.bookmarks { height: 26px; display: flex; align-items: center; padding: 0 4px; border-top: 1px solid #fff; border-bottom: 1px solid #777; }
.bookmarks a { display: flex; align-items: center; gap: 4px; color: inherit; text-decoration: none; white-space: nowrap; }
.bookmarks .more { margin-left: auto; }

.googlebar { height: 30px; display: flex; align-items: center; padding-left: 4px; border-top: 1px solid #fff; border-bottom: 1px solid #777; }
.glogo { width: 57px; font-size: 16px; line-height: 20px; }
.glogo .b { color: #2a56c6; } .glogo .r { color: #d12f2a; } .glogo .y { color: #e2a917; } .glogo .g { color: #23893a; }
.gbox { width: 156px; height: 22px; margin-right: 10px; display: flex; font: 12px/16px "DejaVu Sans Condensed", sans-serif; padding: 1px 0 0 4px; }
.gbox button { width: 16px; height: 19px; }
.gbox svg { width: 10px; height: 6px; }
.cell { display: flex; align-items: center; overflow: visible; flex: none; }
.translate { width: 16px; height: 16px; background: linear-gradient(#b4e0f6, #7fc2e8); font: 11px/15px "Liberation Sans", sans-serif; text-align: center; }
.chev { padding-left: 1px; }
.gright { margin-left: auto; display: flex; }

.shackbar { height: 31px; display: flex; align-items: center; padding-left: 10px; border-top: 1px solid #fff; border-bottom: 1px solid #777; }
.brand { width: 84px; }
.arrow { width: 13px; }
.bulb { width: 23px; }
.labelled { gap: 5px; }
.dim { color: #858585; text-shadow: 1px 1px #fff; }
.login { width: 61px; height: 26px; border-right: 1px solid #fff; box-shadow: 1px 0 #888; }
.searchlabel { font-size: 15px; width: 58px; padding-left: 7px; }
.shackinput { width: 137px; height: 24px; padding-left: 5px; margin-right: 9px; }

.tabs { height: 28px; display: flex; align-items: flex-end; padding: 3px 0 2px 3px; background: linear-gradient(#a4a4a4, #b8b8b8); border-bottom: 1px solid #808080; }
.tab { width: 250px; height: 22px; display: flex; align-items: center; padding: 0 8px; gap: 4px; border: 1px solid #888; border-bottom: 0; border-radius: 3px 3px 0 0; background: linear-gradient(#b9b9b9, #adadad); white-space: nowrap; }
.tab span { flex: 1; }
.tab.on { height: 24px; font-weight: bold; background: linear-gradient(#e3e3e3, #c0c0c0); border-color: #ddd #888 #c0c0c0 #ddd; }
.tab .x, .tab .x svg { width: 14px; height: 14px; display: block; }
.newtab { width: 30px; height: 22px; border: 1px solid #888; border-bottom: 0; background: none; color: #777; }
.alltabs { margin-left: auto; width: 18px; height: 22px; border: 1px solid #888; border-right: 0; background: #b4b4b4; }
.alltabs svg { width: 10px; height: 6px; }

.screen > .viewport { flex: 1; min-height: 0; display: flex; background: #fff; }
.page { flex: 1; min-width: 0; overflow: hidden; display: flex; flex-direction: column; font: 12px/16px "DejaVu Sans Condensed", "DejaVu Sans", sans-serif; }
.page a { color: #0000c0; }
.top { flex: none; height: 142px; display: grid; grid-template-columns: 97px 1fr; grid-template-rows: 34px auto; padding: 4px 8px 0 16px; border-top: 1px solid #777; align-content: start; }
.school { grid-column: 1 / 3; margin: 0; text-align: right; font-weight: bold; }
.logo { width: 82px; height: 82px; }
.headings h2 { margin: 0; font-size: 13px; line-height: 15px; }
.pref { display: block; font-size: 11px; }
.backrow { display: flex; align-items: center; height: 20px; font-size: 13px; }
.left { width: 8px; height: 12px; margin: 0 2px 0 5px; }
.powrot { width: 108px; font-weight: bold; }
.gold { flex: none; height: 29px; line-height: 28px; padding-left: 5px; color: #4a3d18; background: linear-gradient(#f7de6b 0, #f5dc6a 50%, #ebc851 50%, #edcc58 100%); border-top: 1px solid #d6b54b; }
.panels { flex: 1; display: flex; margin: 4px 2px 0 4px; border: 1px solid #ccc; border-bottom: 0; min-height: 0; }
.side { width: 261px; flex: none; border-right: 1px solid #ccc; background: linear-gradient(90deg, #fff 0, #fbfbe6 60%, #f9f9de 100%); font-family: "Noto Sans", sans-serif; }
.side strong { font-family: "DejaVu Sans Condensed", sans-serif; }
.side ul { list-style: none; margin: 0; padding: 1px 0 0 24px; }
.side li { line-height: 23px; white-space: nowrap; }
.main { flex: 1; min-width: 0; }
.main h3 { margin: 0; height: 38px; padding-left: 9px; font-size: 12px; line-height: 37px; background: #fffff0; border-bottom: 1px solid #d0d0c8; }
.range { height: 28px; display: flex; align-items: center; gap: 12px; padding-left: 6px; font-weight: bold; background: linear-gradient(#f3f3f3 50%, #e9e9e9 50%); }
.tools { height: 49px; display: flex; align-items: center; gap: 6px; padding: 4px 6px 0 4px; border-bottom: 2px solid #dcc283; }
.tool, .tool svg { width: 36px; height: 36px; display: block; }
.tools label { margin: -22px 2px 0 auto; font-weight: bold; }
.selectbox { position: relative; width: 102px; height: 20px; margin-top: -24px; border: 1px solid #7f9db9; background: #fff; }
.selectbox select { width: 100%; height: 18px; appearance: none; border: 0; padding-left: 1px; background: none; font: 11px/16px "Noto Sans", sans-serif; }
.selectbox svg { position: absolute; right: 1px; top: 1px; width: 13px; height: 16px; background: #c3d3fb; pointer-events: none; }
.bulk { height: 33px; display: flex; align-items: center; padding: 0 4px 0 8px; background: linear-gradient(#f3f3f3 50%, #e9e9e9 50%); font-size: 11px; }
.bulk label { width: 188px; height: 26px; line-height: 24px; padding-left: 10px; margin-right: 10px; border-right: 1px solid #bbb; white-space: nowrap; }
.bulkend { margin-left: auto; height: 26px; border-right: 1px solid #bbb; }
input[type="checkbox"] { appearance: none; width: 12px; height: 12px; background: #fff; border: 1px solid; border-color: #555 #ddd #ddd #555; box-shadow: inset 1px 1px #222; flex: none; }
.remove { width: 98px; height: 18px; line-height: 14px; border: 1px solid #777; background: linear-gradient(#f0f0f0, #d0d0d0); font-weight: bold; font-size: 12px; white-space: nowrap; }
.record { display: flex; line-height: 13px; font-family: "Noto Sans", sans-serif; }
.pick { width: 31px; height: 196px; padding: 14px 0 0 9px; border-right: 1px solid #ccc; }
.num { width: 51px; text-align: right; padding-top: 14px; font-weight: bold; }
.text { padding: 11px 0 0 6px; white-space: nowrap; }
.text > a { display: block; font-size: 13px; }
.text p { margin: 0 0 7px; }
.text p span { display: block; }
.scroll { width: 13px; flex: none; display: flex; flex-direction: column; background: repeating-conic-gradient(#c0c0c0 0 25%, #fff 0 50%) 0 0 / 2px 2px; }
.scroll .raised { height: 15px; width: 13px; }
.scroll svg { width: 10px; height: 6px; flex: none; }
.scroll .thumb { height: 17px; }
.scroll .down { margin-top: auto; }

.status { height: 29px; display: flex; gap: 2px; border-top: 1px solid #777; border-bottom: 1px solid #999; padding: 1px 2px 1px 0; }
.pane { display: flex; align-items: center; justify-content: center; border: 1px solid; border-color: #888 #fff #fff #888; }
.pane.grow { flex: 1; justify-content: flex-start; padding-left: 5px; }
.pane.gears { width: 48px; }
.pane.sb { width: 20px; }
.pane.sb svg { width: 18px; height: 18px; flex: none; }
.pane.zotero { width: 53px; font: 16px/20px "DejaVu Sans", sans-serif; color: #222; }
.zotero i { color: #b52a2a; font-style: normal; }

.taskbar { height: 29px; display: flex; align-items: center; padding: 2px 2px 0; border-top: 1px solid #fff; font-size: 14px; }
.start { width: 54px; height: 24px; font-weight: bold; gap: 1px; }
.grip { width: 3px; height: 20px; margin: 0 7px; border: 1px solid; border-color: #fff #808080 #808080 #fff; }
.quick { display: flex; gap: 7px; }
.qmore { margin-left: 20px; font-weight: bold; }
.grip + .tasks { margin-left: -3px; }
.tasks { flex: 1; min-width: 0; display: flex; gap: 3px; }
.task { flex: 1; min-width: 0; height: 24px; justify-content: flex-start; gap: 4px; padding-left: 4px; white-space: nowrap; overflow: hidden; }
.task.active { font-weight: bold; border-color: #000 #fff #fff #000; box-shadow: none; background: repeating-conic-gradient(#c8c8c8 0 25%, #fff 0 50%) 0 0 / 2px 2px; }
.tray { width: 212px; height: 24px; margin-left: 7px; display: flex; align-items: center; gap: 2px; padding: 0 8px 0 3px; border: 1px solid; border-color: #888 #fff #fff #888; }
.tray .warn { margin-left: 2px; }
.tray time { margin-left: auto; font-size: 13px; }
</style>
